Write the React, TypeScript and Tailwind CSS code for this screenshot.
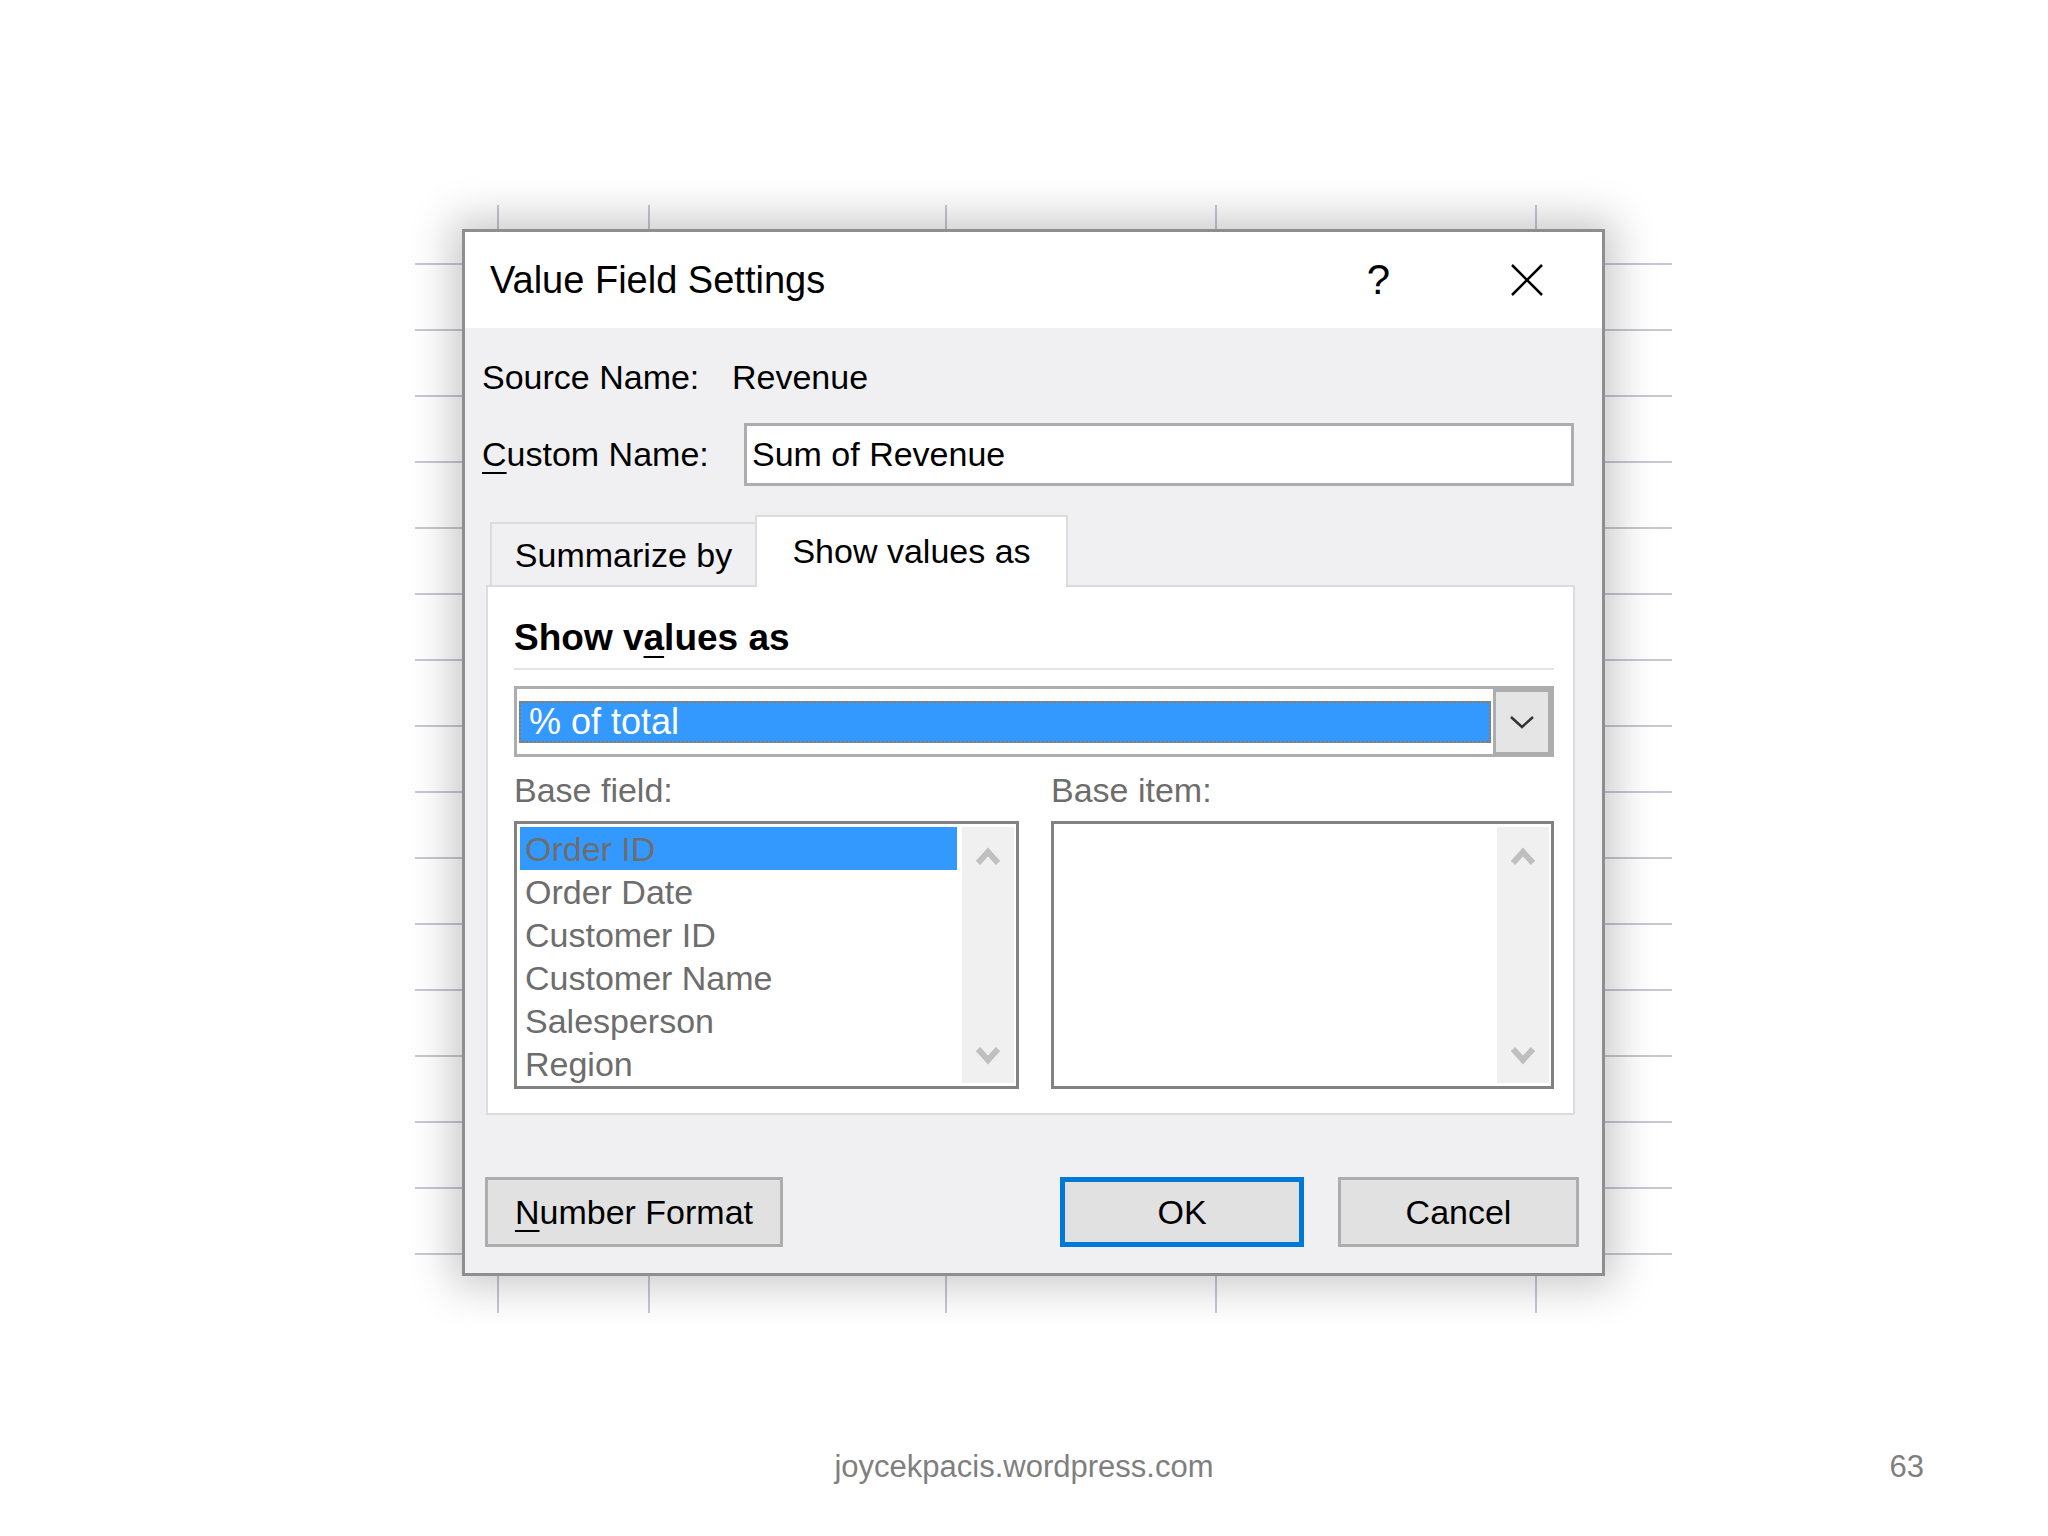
import React from "react";

const baseFields = [
    "Order ID",
    "Order Date",
    "Customer ID",
    "Customer Name",
    "Salesperson",
    "Region",
];

function ScrollArrow({ up }: { up?: boolean }) {
    return (
        <svg width="26" height="20" viewBox="0 0 26 20">
            <polyline
                points={up ? "3,17 13,6 23,17" : "3,3 13,14 23,3"}
                fill="none"
                stroke="#bfbfbf"
                strokeWidth="6"
            />
        </svg>
    );
}

function ListBox({ items, selected }: { items: string[]; selected?: number }) {
    return (
        <div className="flex h-[268px] border-[3px] border-[#828282] bg-white p-[3px] pr-[2px]">
            <div className="flex flex-1 flex-col">
                {items.map((item, i) => (
                    <div
                        key={item}
                        className={`flex h-[43px] items-center pl-[5px] pt-[2px] text-[34px] text-[#6d6d6d] ${
                            i === selected ? "bg-[#3399ff]" : ""
                        }`}
                    >
                        {item}
                    </div>
                ))}
            </div>
            {/* scrollbar */}
            <div className="ml-[5px] flex w-[52px] flex-col items-center justify-between bg-[#f0f0f0] pt-[19px] pb-[17px]">
                <ScrollArrow up />
                <ScrollArrow />
            </div>
        </div>
    );
}

function Grid() {
    const rows = Array.from({ length: 16 }, (_, i) => 59 + i * 66);
    const cols = [83, 234, 531, 801, 1121];
    return (
        <svg
            className="absolute inset-0"
            width="1257"
            height="1108"
            viewBox="0 0 1257 1108"
        >
            {rows.map((y) => (
                <line key={y} x1="0" y1={y} x2="1257" y2={y} stroke="#c8c8d4" strokeWidth="2" />
            ))}
            {cols.map((x) => (
                <line key={x} x1={x} y1="0" x2={x} y2="1108" stroke="#c8c8d4" strokeWidth="2" />
            ))}
        </svg>
    );
}

function Dialog() {
    return (
        <div className="relative flex h-[1047px] w-[1143px] flex-col border-[3px] border-[#8e8e8e] bg-[#f0f0f2] shadow-[0_0_40px_10px_rgba(0,0,0,0.22)]">
            {/* Title bar */}
            <div className="flex h-[96px] items-center bg-white pl-[25px]">
                <span className="text-[38px] text-black">Value Field Settings</span>
                <span className="ml-auto text-[42px] leading-none text-black">?</span>
                <svg className="ml-[120px] mr-[58px]" width="34" height="34" viewBox="0 0 34 34">
                    <path d="M2 2 L32 32 M32 2 L2 32" stroke="#000" strokeWidth="2.5" />
                </svg>
            </div>

            {/* Source name */}
            <div className="mt-[29px] flex h-[40px] items-center pl-[17px] text-[34px] text-black">
                <span className="w-[250px]">Source Name:</span>
                <span>Revenue</span>
            </div>

            {/* Custom name */}
            <div className="mt-[26px] flex h-[63px] items-center pl-[17px] text-[34px] text-black">
                <span className="w-[262px]">
                    <span className="underline decoration-[2px] underline-offset-[6px]">C</span>ustom Name:
                </span>
                <div className="flex h-[63px] w-[830px] items-center border-[3px] border-[#adadad] bg-white pl-[5px]">
                    Sum of Revenue
                </div>
            </div>

            {/* Tabs */}
            <div className="mt-[29px] ml-[25px] flex h-[70px] items-end text-[34px] text-black">
                <div className="flex h-[63px] w-[265px] items-center justify-center border-t-2 border-l-2 border-[#dcdcdc] bg-[#f0f0f2] pt-[2px]">
                    Summarize by
                </div>
                <div className="relative z-10 -mb-[2px] flex h-[72px] w-[313px] items-center justify-center border-2 border-b-0 border-[#dcdcdc] bg-white pb-[2px]">
                    Show values as
                </div>
            </div>

            {/* Tab panel */}
            <div className="ml-[21px] flex h-[530px] w-[1089px] flex-col border-2 border-[#dcdcdc] bg-white pl-[26px] pr-[19px]">
                <div className="mt-[29px] flex h-[44px] items-center text-[37px] font-bold text-black">
                    Show v<span className="underline decoration-[2px] underline-offset-[6px]">a</span>lues as
                </div>
                <div className="mt-[8px] h-[2px] bg-[#e3e3e3]" />

                {/* Combo box */}
                <div className="mt-[16px] flex h-[71px] border-[3px] border-[#adadad] bg-white">
                    <div className="flex flex-1 items-center px-[2px]">
                        <div className="flex h-[42px] w-full items-center border-2 border-dotted border-[#b5702e] bg-[#3399ff] pl-[8px] text-[36px] text-white">
                            % of total
                        </div>
                    </div>
                    <div className="w-[58px] bg-[#adadad] pt-[3px] pr-[3px] pb-[2px] pl-[3px]">
                        <div className="flex h-full items-center justify-center bg-[#e5e5e5]">
                            <svg width="26" height="16" viewBox="0 0 26 16">
                                <polyline points="2,3 13,13 24,3" fill="none" stroke="#333" strokeWidth="2.5" />
                            </svg>
                        </div>
                    </div>
                </div>

                {/* Base field / Base item */}
                <div className="mt-[13px] grid grid-cols-[505px_503px] gap-x-[32px]">
                    <div className="flex h-[40px] items-center text-[34px] text-[#6d6d6d]">Base field:</div>
                    <div className="flex h-[40px] items-center text-[34px] text-[#6d6d6d]">Base item:</div>
                    <div className="mt-[11px]">
                        <ListBox items={baseFields} selected={0} />
                    </div>
                    <div className="mt-[11px]">
                        <ListBox items={[]} />
                    </div>
                </div>
            </div>

            {/* Buttons */}
            <div className="mt-[62px] flex h-[70px] pr-[23px] pl-[20px] text-[34px] text-black">
                <div className="flex w-[298px] items-center justify-center border-[3px] border-[#adadad] bg-[#e1e1e1]">
                    <span>
                        <span className="underline decoration-[2px] underline-offset-[6px]">N</span>umber Format
                    </span>
                </div>
                <div className="ml-auto flex w-[244px] items-center justify-center border-[5px] border-[#0078d7] bg-[#e1e1e1]">
                    OK
                </div>
                <div className="ml-[34px] flex w-[241px] items-center justify-center border-[3px] border-[#adadad] bg-[#e1e1e1]">
                    Cancel
                </div>
            </div>
        </div>
    );
}

export default function App() {
    return (
        <div className="flex h-[1536px] w-[2048px] flex-col bg-white font-['Liberation_Sans',Arial,sans-serif]">
            <div className="relative mt-[205px] ml-[415px] h-[1108px] w-[1257px] pt-[24px] pl-[47px]">
                <Grid />
                <Dialog />
            </div>

            {/* Footer */}
            <div className="mt-[131px] grid h-[40px] grid-cols-[1fr_auto_1fr] items-center text-[31px] text-[#7f7f7f]">
                <div />
                <div>joycekpacis.wordpress.com</div>
                <div className="pr-[124px] text-right">63</div>
            </div>
        </div>
    );
}
